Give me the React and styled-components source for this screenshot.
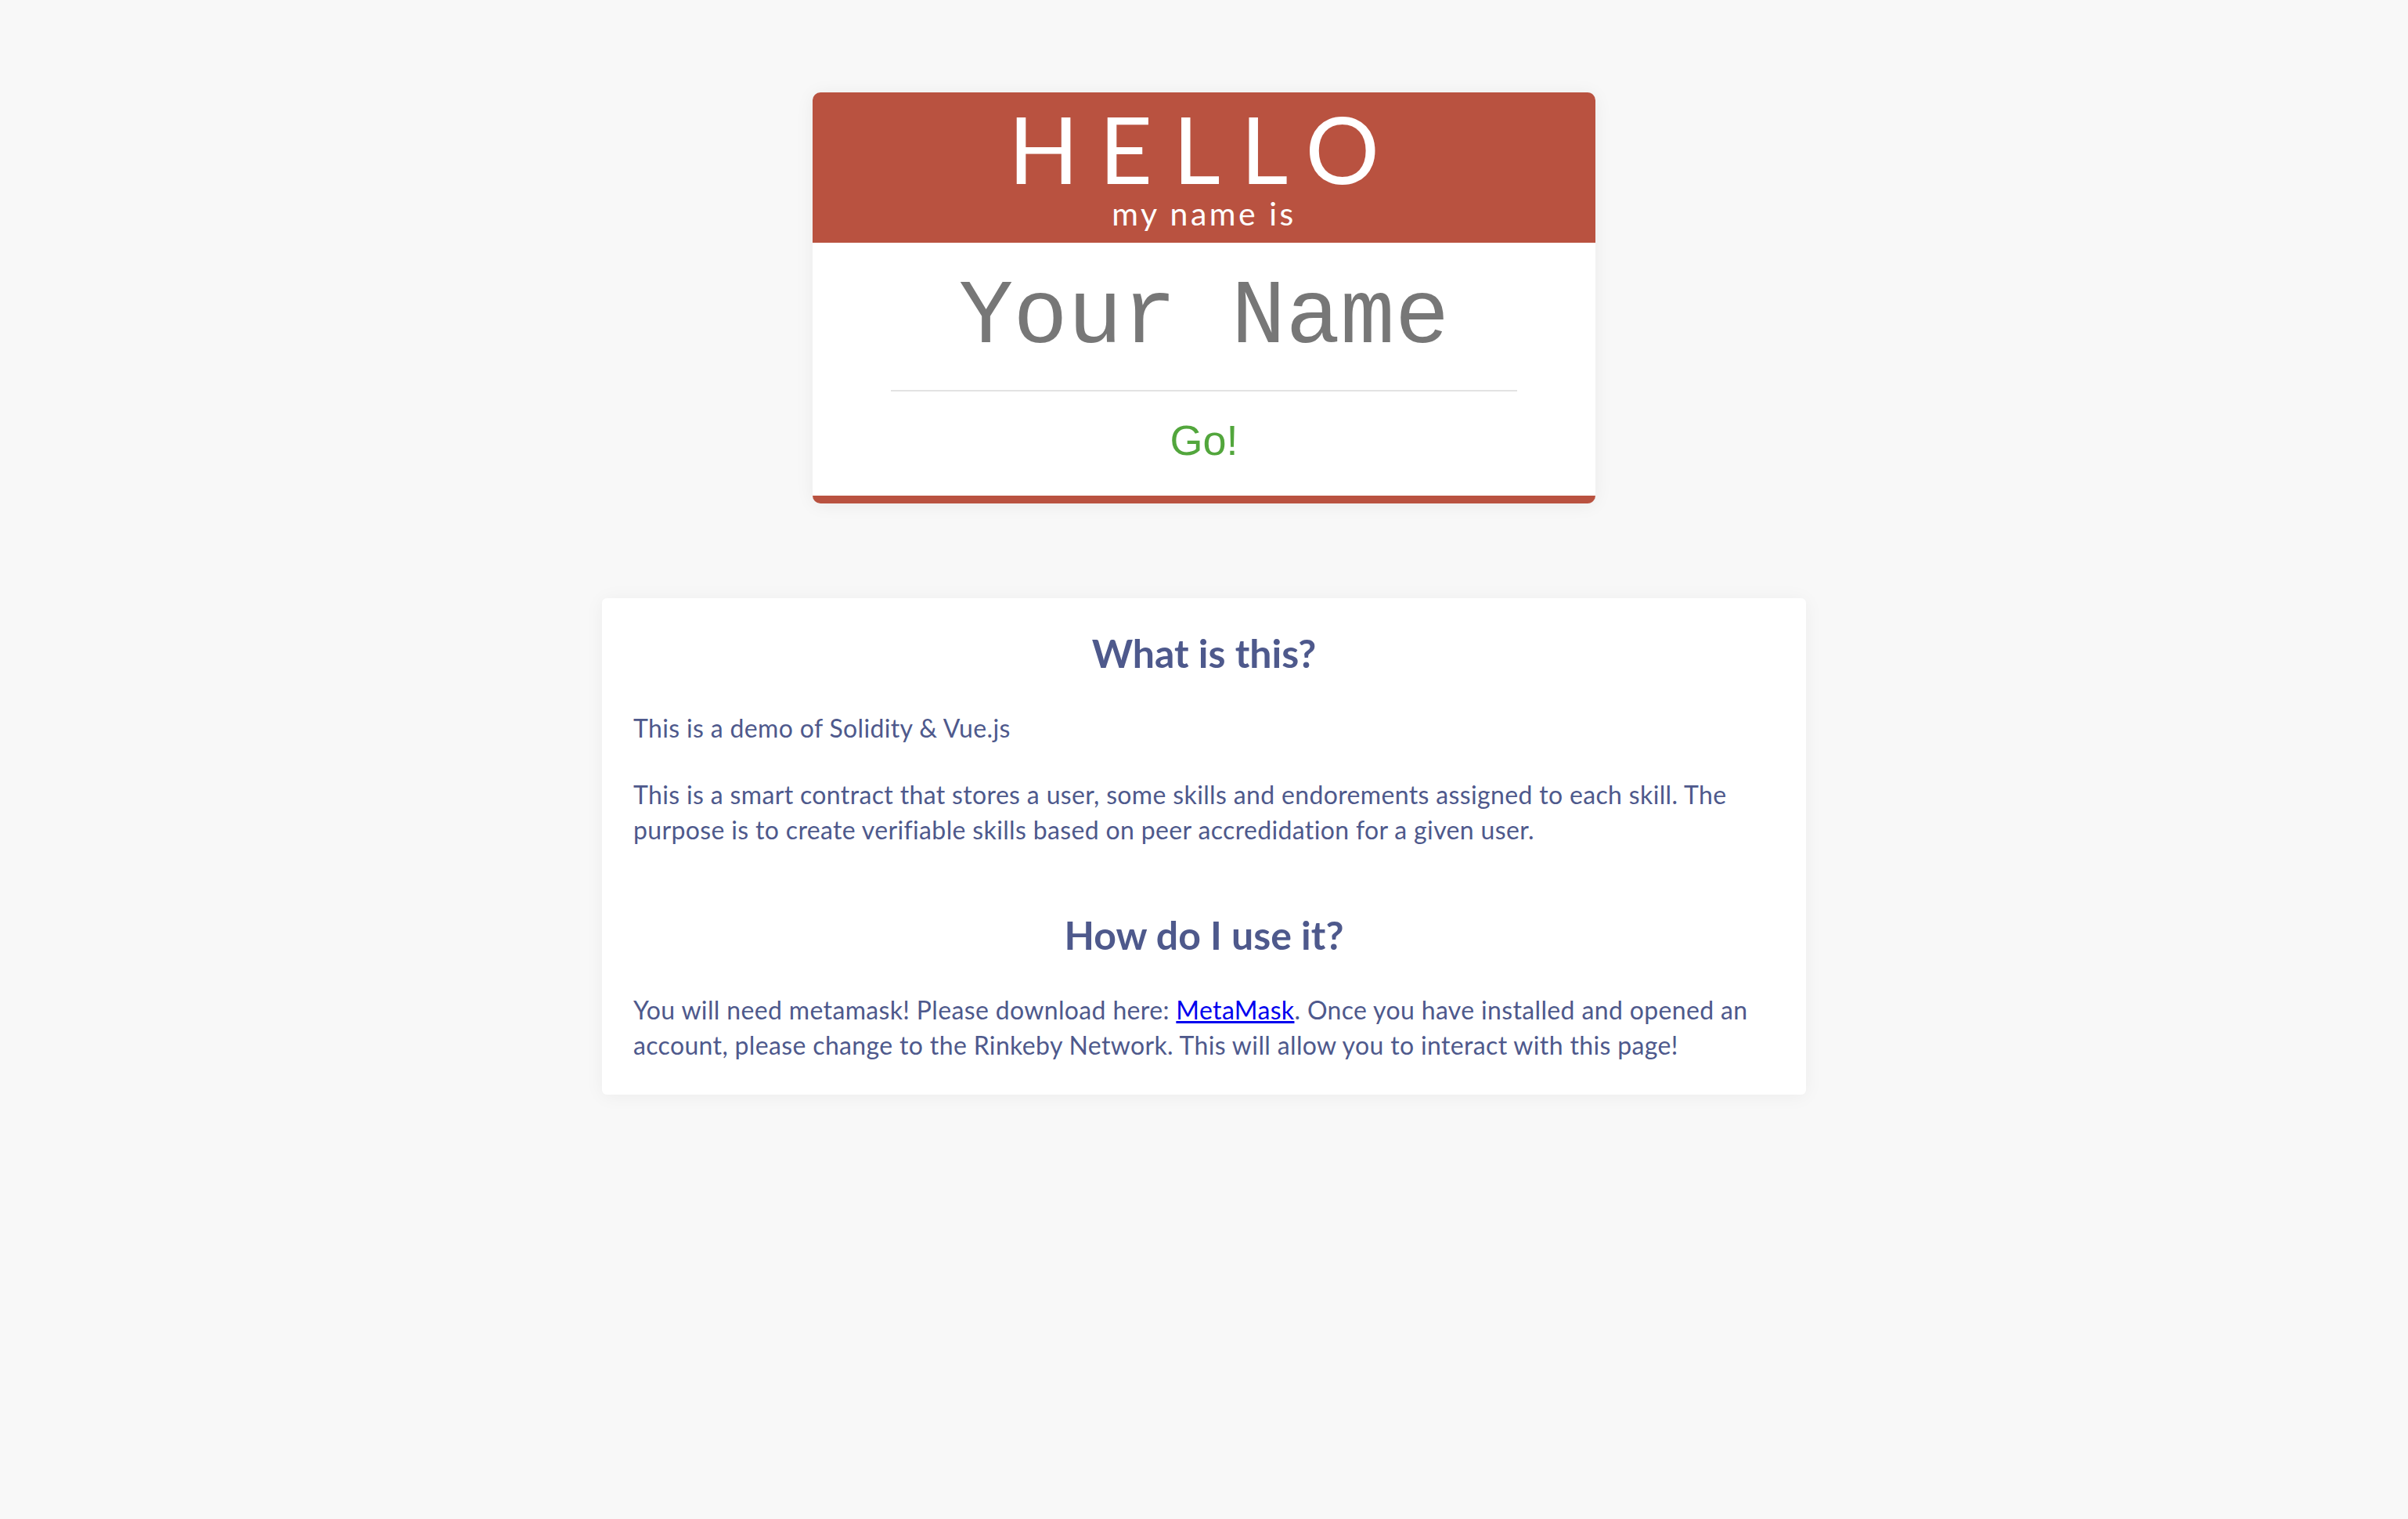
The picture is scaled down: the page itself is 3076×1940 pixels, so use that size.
import React from 'react';
import styled, { createGlobalStyle } from 'styled-components';

const GlobalStyle = createGlobalStyle`
  html, body {
    margin: 0;
    padding: 0;
    background: #f8f8f8;
  }
  body {
    font-family: Lato, "Noto Sans", sans-serif;
    color: #4e598c;
  }
`;

const Page = styled.div`
  min-height: 1940px;
  padding: 118px 0 0;
  box-sizing: border-box;
`;

const NameCard = styled.div`
  width: 1000px;
  margin: 0 auto;
  background: #fff;
  border-radius: 10px;
  border-bottom: 10px solid #b95240;
  box-shadow: 0 2px 24px rgba(0, 0, 0, 0.06);
  overflow: hidden;
`;

const CardHeader = styled.div`
  background: #b95240;
  color: #fff;
  text-align: center;
  height: 192px;
  box-sizing: border-box;
  padding-top: 13px;
`;

const Hello = styled.div`
  font-family: Lato, sans-serif;
  font-size: 118px;
  line-height: 1;
  letter-spacing: 26px;
`;

const Subtitle = styled.div`
  font-family: Lato, sans-serif;
  font-size: 41px;
  line-height: 1;
  letter-spacing: 3.5px;
  margin-top: 3px;
`;

const CardBody = styled.div`
  padding: 27px 100px 40px;
  display: flex;
  flex-direction: column;
  align-items: center;
`;

const NameInput = styled.input`
  width: 100%;
  box-sizing: border-box;
  border: none;
  border-bottom: 2px solid #e3e3e3;
  outline: none;
  padding: 0 0 22px;
  text-align: center;
  font-family: "Liberation Mono", "Courier New", monospace;
  font-size: 116px;
  line-height: 1.2;
  color: #777;
  background: transparent;

  &::placeholder {
    color: #777;
    opacity: 1;
  }
`;

const GoButton = styled.button`
  margin: 33px 0 0;
  padding: 0;
  border: none;
  background: none;
  font-family: "Liberation Sans", Arial, sans-serif;
  font-size: 54px;
  line-height: 1.1;
  color: #52a63c;
  cursor: pointer;
`;

const InfoCard = styled.div`
  width: 50%;
  margin: 121px auto 0;
  background: #fff;
  border-radius: 6px;
  box-shadow: 0 2px 24px rgba(0, 0, 0, 0.05);
  padding: 40px;
  box-sizing: border-box;
`;

const Section = styled.section`
  & + & {
    margin-top: 81px;
  }
`;

const Heading = styled.h2`
  margin: 0 0 44px;
  text-align: center;
  font-size: 50px;
  line-height: 1.2;
  font-weight: 700;
  color: #4e598c;
`;

const Text = styled.p`
  margin: 0;
  font-size: 32px;
  line-height: 1.4;
  letter-spacing: 0.35px;
  color: #4e598c;

  & + & {
    margin-top: 41px;
  }

  a {
    color: #0000ee;
  }
`;

export default function App() {
  return (
    <>
      <GlobalStyle />
      <Page>
        <NameCard>
          <CardHeader>
            <Hello>HELLO</Hello>
            <Subtitle>my name is</Subtitle>
          </CardHeader>
          <CardBody>
            <NameInput placeholder="Your Name" />
            <GoButton>Go!</GoButton>
          </CardBody>
        </NameCard>

        <InfoCard>
          <Section>
            <Heading>What is this?</Heading>
            <Text>This is a demo of Solidity &amp; Vue.js</Text>
            <Text>
              This is a smart contract that stores a user, some skills and endorements assigned to each
              skill. The purpose is to create verifiable skills based on peer accredidation for a given user.
            </Text>
          </Section>
          <Section>
            <Heading>How do I use it?</Heading>
            <Text>
              You will need metamask! Please download here: <a href="#metamask">MetaMask</a>. Once you have
              installed and opened an account, please change to the Rinkeby Network. This will allow you to
              interact with this page!
            </Text>
          </Section>
        </InfoCard>
      </Page>
    </>
  );
}
